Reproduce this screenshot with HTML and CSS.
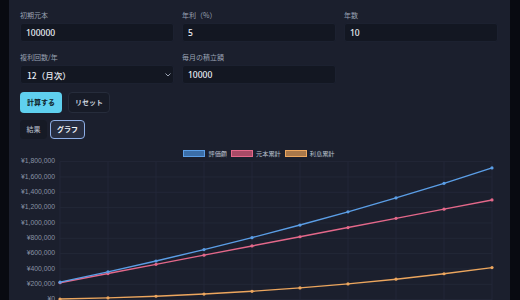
FILE: index.html
```html
<!DOCTYPE html>
<html lang="ja">
<head>
<meta charset="utf-8">
<title>複利計算</title>
<link rel="stylesheet" href="styles.css">
</head>
<body>
<div class="frame">
  <main class="panel">
    <div class="form-grid">
      <label class="field">
        <span class="label">初期元本</span>
        <input class="input" type="text" value="100000">
      </label>
      <label class="field">
        <span class="label">年利（%）</span>
        <input class="input" type="text" value="5">
      </label>
      <label class="field">
        <span class="label">年数</span>
        <input class="input" type="text" value="10">
      </label>
      <label class="field">
        <span class="label">複利回数/年</span>
        <span class="select-wrap">
          <select class="input select">
            <option>12（月次）</option>
          </select>
          <svg class="chevron" width="6" height="4" viewBox="0 0 6 4"><path d="M0.8 0.8 L3 3 L5.2 0.8" fill="none" stroke="#aab2c2" stroke-width="0.9" stroke-linecap="round" stroke-linejoin="round"/></svg>
        </span>
      </label>
      <label class="field">
        <span class="label">毎月の積立額</span>
        <input class="input" type="text" value="10000">
      </label>
    </div>

    <div class="actions">
      <button class="btn btn-primary">計算する</button>
      <button class="btn btn-secondary">リセット</button>
    </div>

    <div class="tabs">
      <button class="tab">結果</button>
      <button class="tab tab-active">グラフ</button>
    </div>

    <div class="legend">
      <span class="legend-item"><span class="swatch swatch-blue"></span>評価額</span>
      <span class="legend-item"><span class="swatch swatch-pink"></span>元本累計</span>
      <span class="legend-item"><span class="swatch swatch-orange"></span>利息累計</span>
    </div>

    <svg class="chart" width="478" height="150" viewBox="0 0 478 150">
      <g class="grid-lines" stroke="#252a3a" stroke-width="0.8">
        <line x1="40" y1="142.6" x2="472" y2="142.6"/>
        <line x1="40" y1="127.27" x2="472" y2="127.27"/>
        <line x1="40" y1="111.94" x2="472" y2="111.94"/>
        <line x1="40" y1="96.61" x2="472" y2="96.61"/>
        <line x1="40" y1="81.28" x2="472" y2="81.28"/>
        <line x1="40" y1="65.95" x2="472" y2="65.95"/>
        <line x1="40" y1="50.62" x2="472" y2="50.62"/>
        <line x1="40" y1="35.29" x2="472" y2="35.29"/>
        <line x1="40" y1="19.96" x2="472" y2="19.96"/>
        <line x1="40" y1="4.63" x2="472" y2="4.63"/>
        <line x1="40" y1="4.63" x2="40" y2="150"/>
        <line x1="88" y1="4.63" x2="88" y2="150"/>
        <line x1="136" y1="4.63" x2="136" y2="150"/>
        <line x1="184" y1="4.63" x2="184" y2="150"/>
        <line x1="232" y1="4.63" x2="232" y2="150"/>
        <line x1="280" y1="4.63" x2="280" y2="150"/>
        <line x1="328" y1="4.63" x2="328" y2="150"/>
        <line x1="376" y1="4.63" x2="376" y2="150"/>
        <line x1="424" y1="4.63" x2="424" y2="150"/>
        <line x1="472" y1="4.63" x2="472" y2="150"/>
      </g>
      <g class="ticks" text-anchor="end" dominant-baseline="middle">
        <text x="35" y="4.63">¥1,800,000</text>
        <text x="35" y="19.96">¥1,600,000</text>
        <text x="35" y="35.29">¥1,400,000</text>
        <text x="35" y="50.62">¥1,200,000</text>
        <text x="35" y="65.95">¥1,000,000</text>
        <text x="35" y="81.28">¥800,000</text>
        <text x="35" y="96.61">¥600,000</text>
        <text x="35" y="111.94">¥400,000</text>
        <text x="35" y="127.27">¥200,000</text>
        <text x="35" y="142.6">¥0</text>
      </g>
      <polyline fill="none" stroke="#eca65e" stroke-width="1.4" points="40,141.99 88,140.89 136,139.25 184,137.06 232,134.29 280,130.91 328,126.88 376,122.18 424,116.76 472,110.6"/>
      <polyline fill="none" stroke="#e4688a" stroke-width="1.4" points="40,125.74 88,116.54 136,107.34 184,98.14 232,88.94 280,79.75 328,70.55 376,61.35 424,52.15 472,42.95"/>
      <polyline fill="none" stroke="#5b9ee6" stroke-width="1.4" points="40,125.13 88,114.83 136,103.99 184,92.61 232,80.64 280,68.05 328,54.83 376,40.93 424,26.31 472,10.95"/>
      <g fill="#eca65e">
        <circle cx="40" cy="141.99" r="1.6"/><circle cx="88" cy="140.89" r="1.6"/><circle cx="136" cy="139.25" r="1.6"/><circle cx="184" cy="137.06" r="1.6"/><circle cx="232" cy="134.29" r="1.6"/><circle cx="280" cy="130.91" r="1.6"/><circle cx="328" cy="126.88" r="1.6"/><circle cx="376" cy="122.18" r="1.6"/><circle cx="424" cy="116.76" r="1.6"/><circle cx="472" cy="110.6" r="1.6"/>
      </g>
      <g fill="#e4688a">
        <circle cx="40" cy="125.74" r="1.6"/><circle cx="88" cy="116.54" r="1.6"/><circle cx="136" cy="107.34" r="1.6"/><circle cx="184" cy="98.14" r="1.6"/><circle cx="232" cy="88.94" r="1.6"/><circle cx="280" cy="79.75" r="1.6"/><circle cx="328" cy="70.55" r="1.6"/><circle cx="376" cy="61.35" r="1.6"/><circle cx="424" cy="52.15" r="1.6"/><circle cx="472" cy="42.95" r="1.6"/>
      </g>
      <g fill="#5b9ee6">
        <circle cx="40" cy="125.13" r="1.6"/><circle cx="88" cy="114.83" r="1.6"/><circle cx="136" cy="103.99" r="1.6"/><circle cx="184" cy="92.61" r="1.6"/><circle cx="232" cy="80.64" r="1.6"/><circle cx="280" cy="68.05" r="1.6"/><circle cx="328" cy="54.83" r="1.6"/><circle cx="376" cy="40.93" r="1.6"/><circle cx="424" cy="26.31" r="1.6"/><circle cx="472" cy="10.95" r="1.6"/>
      </g>
    </svg>
  </main>
</div>
</body>
</html>
```

FILE: styles.css
```css
* {
  box-sizing: border-box;
}

html, body {
  margin: 0;
  padding: 0;
  height: 300px;
  overflow: hidden;
  background: #080a11;
  font-family: "Noto Sans CJK JP", "Noto Sans", sans-serif;
}

.frame {
  display: flex;
  height: 300px;
}

.panel {
  margin-left: 9px;
  width: 501px;
  height: 300px;
  background: #1b1f2d;
  padding: 10px 12px 0 11px;
  display: flex;
  flex-direction: column;
  overflow: hidden;
}

.form-grid {
  display: grid;
  grid-template-columns: repeat(3, 154px);
  column-gap: 8px;
  row-gap: 10px;
}

.field {
  display: flex;
  flex-direction: column;
}

.label {
  display: block;
  font-size: 7px;
  line-height: 10px;
  color: #9aa2b3;
  margin-bottom: 3px;
}

.input {
  display: block;
  width: 100%;
  height: 19px;
  margin: 0;
  padding: 0 5px;
  background: #131722;
  border: 1px solid #1c2130;
  border-radius: 3px;
  color: #e9edf4;
  font-family: "Noto Sans", "Noto Sans CJK JP", sans-serif;
  font-size: 8.5px;
  font-weight: 500;
  outline: none;
}

.select-wrap {
  position: relative;
  display: block;
}

.select {
  appearance: none;
  -webkit-appearance: none;
  padding-left: 6px;
  font-family: "Noto Sans CJK JP", "Noto Sans", sans-serif;
}

.chevron {
  position: absolute;
  right: 3px;
  top: 8px;
}

.actions {
  display: flex;
  gap: 6px;
  margin-top: 8px;
}

.btn {
  height: 21px;
  margin: 0;
  border-radius: 4px;
  font-family: "Noto Sans CJK JP", sans-serif;
  font-size: 7px;
  font-weight: 700;
  line-height: 1;
  cursor: pointer;
}

.btn-primary {
  padding: 0 7px;
  border: 0;
  background: #5fd0ef;
  color: #0e1a26;
}

.btn-secondary {
  padding: 0 6px;
  border: 1px solid #262c3b;
  background: #171b27;
  color: #c8cedb;
}

.tabs {
  display: flex;
  gap: 3px;
  margin-top: 7px;
}

.tab {
  height: 19px;
  margin: 0;
  padding: 0 6.5px;
  border: 0;
  border-radius: 4px;
  background: #161a25;
  color: #a9b0bf;
  font-family: "Noto Sans CJK JP", sans-serif;
  font-size: 7px;
  font-weight: 500;
  line-height: 1;
}

.tab-active {
  padding: 0 6px;
  border: 1.5px solid #8eaee6;
  background: #272d40;
  color: #eef2f8;
  font-weight: 700;
}

.legend {
  display: flex;
  justify-content: center;
  gap: 4px;
  margin-top: 11px;
  height: 7px;
  font-size: 6.2px;
  line-height: 7px;
  color: #b9c0cd;
}

.legend-item {
  display: flex;
  align-items: center;
  gap: 3px;
}

.swatch {
  display: block;
  width: 22px;
  height: 7px;
  border: 1px solid;
}

.swatch-blue {
  background: #3b6ea8;
  border-color: #5b9ee6;
}

.swatch-pink {
  background: #a84a66;
  border-color: #e4688a;
}

.swatch-orange {
  background: #a9784a;
  border-color: #eca65e;
}

.chart {
  display: block;
  flex: none;
  overflow: visible;
}

.ticks text {
  font-family: "Liberation Sans", "Noto Sans", sans-serif;
  font-size: 6.8px;
  fill: #8a92a4;
}
```
